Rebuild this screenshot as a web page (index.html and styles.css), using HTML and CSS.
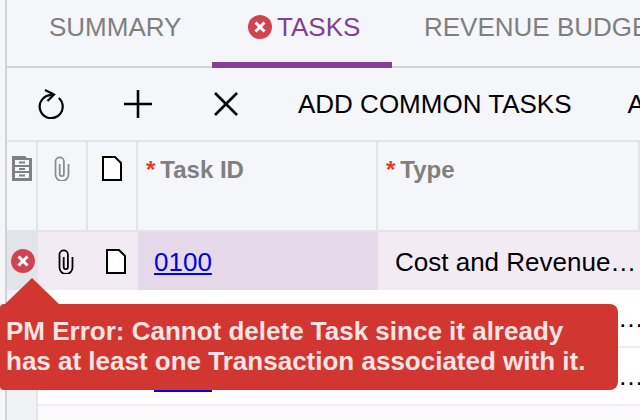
FILE: index.html
```html
<!DOCTYPE html>
<html>
<head>
    <title>Tasks</title>
    <link rel="stylesheet" href="styles.css">
</head>
<body>
    <div class="page">
        <div class="tabs">
            <div class="tab tab-summary">SUMMARY</div>
            <div class="tab tab-active">
                <svg class="err-icon" viewBox="0 0 24 24"><circle cx="12" cy="12" r="12" fill="#d0434f"/><path d="M7.500 7.500l9 9M16.500 7.500l-9 9" stroke="#fff" stroke-width="3" fill="none"/></svg>
                <span>TASKS</span>
            </div>
            <div class="tab tab-budget">REVENUE BUDGET</div>
        </div>

        <div class="toolbar">
            <svg class="tool tool-refresh" viewBox="0 0 28 30"><path d="M15.500 6.200A11.500 11.500 0 1 0 21.800 9" fill="none" stroke="#000" stroke-width="2.200"/><path d="M8 1l9 4.500-6.500 6.500" fill="none" stroke="#000" stroke-width="2.200"/></svg>
            <svg class="tool tool-add" viewBox="0 0 28 28"><path d="M14 0v28M0 14h28" stroke="#000" stroke-width="2.600" fill="none"/></svg>
            <svg class="tool tool-del" viewBox="0 0 24 24"><path d="M1 1l22 22M23 1l-22 22" stroke="#000" stroke-width="2.600" fill="none"/></svg>
            <span class="tool-text">ADD COMMON TASKS</span>
            <span class="tool-text tool-more">ADD</span>
        </div>

        <div class="grid">
            <div class="row head">
                <div class="cell c-sel">
                    <svg class="ic-files" viewBox="0 0 20 25"><path d="M0 0h13l2 2h5v23H0z" fill="#808080"/><path d="M3 4h14v5H3zM3 11h14v4H3zM3 17h14v5H3z" fill="#f5f6f9"/><path d="M7 5.500h6v2H7zM7 12h6v2H7zM7 18.500h6v2H7z" fill="#808080"/></svg>
                </div>
                <div class="cell c-att">
                    <svg class="ic-clip" viewBox="0 0 16 25"><path d="M14.500 8v10.500a6.500 6.500 0 0 1-13 0V5.500a4.200 4.200 0 0 1 8.400 0V18a2.100 2.100 0 0 1-4.200 0V8" fill="none" stroke="#8c8c8c" stroke-width="1.800"/></svg>
                </div>
                <div class="cell c-note">
                    <svg class="ic-note" viewBox="0 0 20 25"><path d="M1 1h12l6 6v17H1z" fill="#fff" stroke="#000" stroke-width="2"/></svg>
                </div>
                <div class="cell c-id"><span class="req">*</span>Task ID</div>
                <div class="cell c-type"><span class="req">*</span>Type</div>
            </div>

            <div class="row active">
                <div class="cell c-sel">
                    <svg class="err-icon" viewBox="0 0 24 24"><circle cx="12" cy="12" r="12" fill="#d0434f"/><path d="M7.500 7.500l9 9M16.500 7.500l-9 9" stroke="#fff" stroke-width="3" fill="none"/></svg>
                </div>
                <div class="cell c-att">
                    <svg class="ic-clip" viewBox="0 0 16 25"><path d="M14.500 8v10.500a6.500 6.500 0 0 1-13 0V5.500a4.200 4.200 0 0 1 8.400 0V18a2.100 2.100 0 0 1-4.200 0V8" fill="none" stroke="#000" stroke-width="1.800"/></svg>
                </div>
                <div class="cell c-note">
                    <svg class="ic-note" viewBox="0 0 20 25"><path d="M1 1h12l6 6v17H1z" fill="#fff" stroke="#000" stroke-width="2"/></svg>
                </div>
                <div class="cell c-id"><a href="#">0100</a></div>
                <div class="cell c-type">Cost and Revenue…</div>
            </div>

            <div class="row plain">
                <div class="cell c-sel"></div>
                <div class="cell c-att"></div>
                <div class="cell c-note"></div>
                <div class="cell c-id"></div>
                <div class="cell c-type"><span class="trunc">…</span></div>
            </div>

            <div class="row plain">
                <div class="cell c-sel"></div>
                <div class="cell c-att"></div>
                <div class="cell c-note"></div>
                <div class="cell c-id"><span class="link-cut"></span></div>
                <div class="cell c-type"><span class="trunc">…</span></div>
            </div>

            <div class="row last">
                <div class="cell c-sel"></div>
            </div>
        </div>

        <!-- error tooltip over the grid -->
        <div class="tip">
            <div class="tip-arrow"></div>
            PM Error: Cannot delete Task since it already<br>has at least one Transaction associated with it.
        </div>
    </div>
</body>
</html>
```

FILE: styles.css
```css
html, body {
    margin: 0;
    padding: 0;
}
body {
    width: 640px;
    height: 420px;
    overflow: hidden;
    background: #f5f6f9;
    font-family: "Liberation Sans", Arial, sans-serif;
}
.page {
    position: relative;
    width: 633px;
    height: 420px;
    margin-left: 5px;
    border-left: 2px solid #d2d3d6;
}

/* Tabs */
.tabs {
    display: flex;
    height: 66px;
    border-bottom: 2px solid #d2d3d6;
    font-size: 26px;
    color: #7f7f7f;
}
.tab {
    flex: none;
    height: 68px;
    box-sizing: border-box;
    padding-top: 12px;
    white-space: nowrap;
}
.tab-summary {
    width: 205px;
    padding-left: 42px;
}
.tab-active {
    width: 180px;
    display: flex;
    align-items: flex-start;
    padding-left: 36px;
    color: #843f96;
    border-bottom: 6px solid #843f96;
}
.tab-active .err-icon {
    margin: 3px 5px 0 0;
}
.tab-budget {
    flex: 1;
    min-width: 0;
    height: 66px;
    overflow: hidden;
    padding-left: 32px;
}
.err-icon {
    width: 24px;
    height: 24px;
    flex: none;
}

/* Toolbar */
.toolbar {
    display: flex;
    align-items: center;
    height: 72px;
    overflow: hidden;
    font-size: 26px;
    color: #000;
    white-space: nowrap;
}
.tool {
    flex: none;
}
.tool-refresh {
    width: 28px;
    height: 30px;
    margin-left: 30px;
}
.tool-add {
    width: 28px;
    height: 28px;
    margin-left: 59px;
}
.tool-del {
    width: 24px;
    height: 24px;
    margin-left: 62px;
}
.tool-text {
    margin-left: 60px;
}
.tool-more {
    margin-left: 56px;
}

/* Grid */
.grid {
    border-top: 2px solid #e3e4ea;
}
.row {
    display: flex;
    box-sizing: border-box;
    background: #fff;
}
.cell {
    flex: none;
    box-sizing: border-box;
    display: flex;
    align-items: center;
}
.c-sel {
    width: 31px;
    justify-content: center;
    background: #f1f2f6;
    border-right: 2px solid #e3e4ea;
}
.c-att,
.c-note {
    width: 50px;
    justify-content: center;
}
.c-id {
    width: 240px;
}
.c-type {
    width: 262px;
    overflow: hidden;
}

.head {
    height: 90px;
    background: #f5f6f9;
    border-bottom: 2px solid #e3e4ea;
}
.head .cell {
    align-items: flex-start;
    padding-top: 14px;
    border-right: 2px solid #e3e4ea;
    font-size: 24px;
    font-weight: bold;
    color: #7f7f7f;
}
.head .c-sel {
    background: #f5f6f9;
}
.head .c-id,
.head .c-type {
    padding-left: 8px;
}
.req {
    color: #f5351e;
    margin-right: 5px;
}
.ic-files {
    width: 20px;
    height: 25px;
}
.ic-clip {
    width: 16px;
    height: 25px;
}
.ic-note {
    width: 20px;
    height: 25px;
}

.active {
    height: 58px;
    background: #f3ebf4;
    font-size: 26px;
    color: #000;
}
.active .c-sel {
    background: #e1e5ea;
    border-right: 0;
}
.active .ic-clip,
.active .ic-note {
    margin-left: 6px;
}
.active .c-id {
    background: #e5d9e9;
    padding: 2px 0 0 16px;
}
.active .c-type {
    padding: 2px 0 0 17px;
    white-space: nowrap;
}
a {
    color: #0000e6;
}

.plain {
    height: 58px;
    font-size: 26px;
}
.plain .c-att,
.plain .c-note,
.plain .c-id,
.plain .c-type {
    border-bottom: 2px solid #f3ebf4;
}
.plain .c-id {
    padding-left: 16px;
}
.link-cut {
    width: 58px;
    height: 29px;
    border-bottom: 2px solid #0000e6;
}
.trunc {
    margin-left: 240px;
    white-space: nowrap;
}
.last {
    height: 20px;
    background: #fbfbfc;
}

/* Error tooltip */
.tip {
    position: absolute;
    left: -7px;
    top: 304px;
    width: 618px;
    height: 86px;
    box-sizing: border-box;
    padding: 12px 0 0 6px;
    background: #d13631;
    border-radius: 4px 8px 8px 4px;
    color: #fce4e4;
    font-size: 26px;
    font-weight: bold;
    line-height: 30px;
    white-space: nowrap;
}
.tip-arrow {
    position: absolute;
    left: 5px;
    top: -26px;
    width: 0;
    height: 0;
    border-left: 27px solid transparent;
    border-right: 27px solid transparent;
    border-bottom: 26px solid #d13631;
}
```
